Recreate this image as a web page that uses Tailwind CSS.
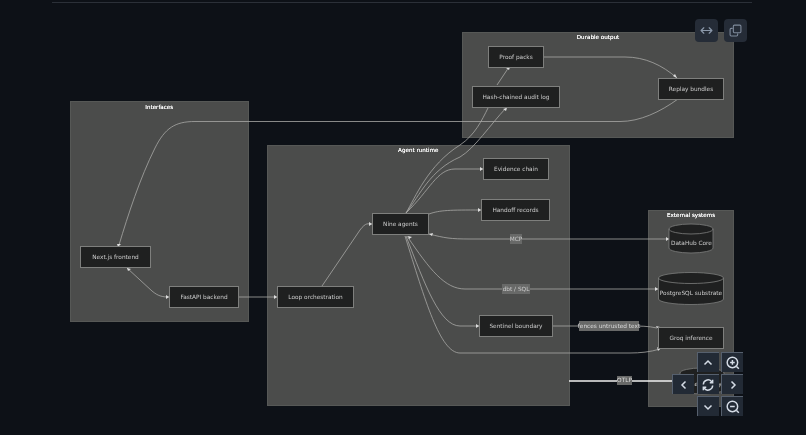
<!DOCTYPE html>
<html lang="en">
<head>
    <meta charset="UTF-8">
    <title>Architecture diagram</title>
    <script src="https://cdn.jsdelivr.net/npm/@tailwindcss/browser@4"></script>
</head>
<body class="bg-[#0d1117] overflow-hidden">
<div class="relative w-[806px] h-[435px] overflow-hidden whitespace-nowrap font-['DejaVu_Sans',sans-serif]">
  <div class="absolute inset-0 blur-[0.3px] will-change-transform">
    <div class="absolute left-[52px] top-[2px] w-[700px] h-px bg-[#2b3038]"></div>

    <!-- clusters -->
    <div class="absolute left-[70px] top-[101px] w-[178.500px] h-[221px] bg-[#4b4c4b] border border-[#565856] text-center text-[5.6px] leading-[11px] text-white [text-shadow:0_0_0.4px_#fff]">Interfaces</div>
    <div class="absolute left-[267px] top-[145px] w-[302.500px] h-[260.500px] bg-[#4b4c4b] border border-[#565856] text-center text-[5.6px] leading-[9px] text-white [text-shadow:0_0_0.4px_#fff]">Agent runtime</div>
    <div class="absolute left-[462px] top-[32px] w-[272px] h-[106px] bg-[#4b4c4b] border border-[#565856] text-center text-[5.6px] leading-[9px] text-white [text-shadow:0_0_0.4px_#fff]">Durable output</div>
    <div class="absolute left-[648px] top-[210px] w-[86px] h-[197px] bg-[#4b4c4b] border border-[#565856] text-center text-[5.6px] leading-[9px] text-white [text-shadow:0_0_0.4px_#fff]">External systems</div>

    <!-- edges -->
    <svg class="absolute left-0 top-0" width="806" height="435" fill="none" stroke="#a8a8a6" stroke-width="0.8">
        <path d="M678 99 C660 112 640 121.500 620 121.500 L195 121.500 C175 121.500 165 128 155 148 C140 178 128 215 119 245"/>
        <path d="M127 268 L152 291 C158 296 162 297 169 297"/>
        <path d="M239 297 L277 297"/>
        <path d="M322 286 L360 230 C366 222 368 224 372 224"/>
        <path d="M406 213 C415 198 428 165 460 145 C475 135 482 120 488 108"/>
        <path d="M406 213 C420 195 430 170 460 157 C475 148 490 125 506 108"/>
        <path d="M406 213 C430 190 437 169 455 169 L483 169"/>
        <path d="M497 85 L509 67"/>
        <path d="M429 214 C440 210 450 210 481 210"/>
        <path d="M429 234 C445 238 450 239 470 239 L669 239"/>
        <path d="M407 236 C430 270 445 289 465 289 L658 289"/>
        <path d="M406 236 C425 285 440 326 460 326 L479 326"/>
        <path d="M405 236 C425 300 440 353 460 353 L630 353 C640 353 650 352 660 349"/>
        <path d="M553 326 L630 326 C640 326 648 326 657 328"/>
        <path d="M544 57 L625 57 C645 57 662 65 677 78"/>
        <path d="M569 381 L672 381" stroke="#f0f0f0" stroke-width="1.500"/>
        <g fill="#dedede" stroke="none">
            <path d="M118 247 L117 244 L121 244 Z"/>
            <path d="M127 268 L131 269 L128 271 Z"/>
            <path d="M169 297 L166 295 L166 299 Z"/>
            <path d="M277 297 L274 295 L274 299 Z"/>
            <path d="M372 224 L369 222 L369 226 Z"/>
            <path d="M510 67 L506 68 L509 70 Z"/>
            <path d="M507 108 L503 109 L506 111 Z"/>
            <path d="M483 169 L480 167 L480 171 Z"/>
            <path d="M481 210 L478 208 L478 212 Z"/>
            <path d="M429 234 L433 233 L432 236 Z"/>
            <path d="M408 236 L412 237 L409 239 Z"/>
            <path d="M669 239 L666 237 L666 241 Z"/>
            <path d="M658 289 L655 287 L655 291 Z"/>
            <path d="M479 326 L476 324 L476 328 Z"/>
            <path d="M677 78 L673 76 L675 74 Z"/>
            <path d="M657 328 L656 326 L660 327 Z"/>
            <path d="M660 349 L657 347 L658 351 Z"/>
        </g>
    </svg>

    <!-- edge labels -->
    <div class="absolute left-[510px] top-[234px] w-[12px] h-[10px] flex items-center justify-center bg-[#686968] text-[5.8px] text-[#ccc]">MCP</div>
    <div class="absolute left-[502px] top-[284px] w-[28px] h-[10px] flex items-center justify-center bg-[#686968] text-[5.8px] text-[#ccc]">dbt / SQL</div>
    <div class="absolute left-[579px] top-[321px] w-[60px] h-[10px] flex items-center justify-center bg-[#686968] text-[5.8px] text-[#ddd]">fences untrusted text</div>
    <div class="absolute left-[617px] top-[376px] w-[15px] h-[9px] flex items-center justify-center bg-[#686968] text-[5.8px] text-[#ddd]">OTLP</div>

    <!-- nodes -->
    <div class="absolute left-[80px] top-[246px] w-[71px] h-[22px] pt-px flex items-center justify-center bg-[#1f2020] border border-[#7e7f7d] text-[5.8px] text-[#ccc]">Next.js frontend</div>
    <div class="absolute left-[169px] top-[286px] w-[70px] h-[22px] pt-px flex items-center justify-center bg-[#1f2020] border border-[#7e7f7d] text-[5.8px] text-[#ccc]">FastAPI backend</div>
    <div class="absolute left-[277px] top-[286px] w-[77px] h-[22px] pt-px flex items-center justify-center bg-[#1f2020] border border-[#7e7f7d] text-[5.8px] text-[#ccc]">Loop orchestration</div>
    <div class="absolute left-[372px] top-[213px] w-[57px] h-[22px] pt-px flex items-center justify-center bg-[#1f2020] border border-[#7e7f7d] text-[5.8px] text-[#ccc]">Nine agents</div>
    <div class="absolute left-[483px] top-[158px] w-[66px] h-[22px] pt-px flex items-center justify-center bg-[#1f2020] border border-[#7e7f7d] text-[5.8px] text-[#ccc]">Evidence chain</div>
    <div class="absolute left-[481px] top-[199px] w-[69px] h-[22px] pt-px flex items-center justify-center bg-[#1f2020] border border-[#7e7f7d] text-[5.8px] text-[#ccc]">Handoff records</div>
    <div class="absolute left-[488px] top-[46px] w-[56px] h-[22px] pt-px flex items-center justify-center bg-[#1f2020] border border-[#7e7f7d] text-[5.8px] text-[#ccc]">Proof packs</div>
    <div class="absolute left-[472px] top-[86px] w-[88px] h-[22px] pt-px flex items-center justify-center bg-[#1f2020] border border-[#7e7f7d] text-[5.8px] text-[#ccc]">Hash-chained audit log</div>
    <div class="absolute left-[658px] top-[78px] w-[66px] h-[22px] pt-px flex items-center justify-center bg-[#1f2020] border border-[#7e7f7d] text-[5.8px] text-[#ccc]">Replay bundles</div>
    <div class="absolute left-[479px] top-[315px] w-[74px] h-[22px] pt-px flex items-center justify-center bg-[#1f2020] border border-[#7e7f7d] text-[5.8px] text-[#ccc]">Sentinel boundary</div>
    <div class="absolute left-[658px] top-[327px] w-[66px] h-[22px] pt-px flex items-center justify-center bg-[#1f2020] border border-[#7e7f7d] text-[5.8px] text-[#ccc]">Groq inference</div>

    <!-- cylinders -->
    <svg class="absolute left-[668px] top-[223px]" width="47" height="31" fill="#1f2020" stroke="#7e7f7d" stroke-width="0.8">
        <path d="M1 6 A22 5 0 0 1 45 6 L45 25 A22 5 0 0 1 1 25 Z"/>
        <path d="M1 6 A22 5 0 0 0 45 6" fill="none"/>
    </svg>
    <div class="absolute left-[668px] top-[238px] w-[47px] h-[10px] flex items-center justify-center text-[5.8px] text-[#ccc]">DataHub Core</div>
    <svg class="absolute left-[658px] top-[272px]" width="66" height="33" fill="#1f2020" stroke="#7e7f7d" stroke-width="0.8">
        <path d="M0.500 6 A32.500 5.500 0 0 1 65.500 6 L65.500 27 A32.500 5.500 0 0 1 0.500 27 Z"/>
        <path d="M0.500 6 A32.500 5.500 0 0 0 65.500 6" fill="none"/>
    </svg>
    <div class="absolute left-[658px] top-[288px] w-[66px] h-[10px] flex items-center justify-center text-[5.8px] text-[#ccc]">PostgreSQL substrate</div>
    <svg class="absolute left-[679px] top-[367px]" width="47" height="30" fill="#1f2020" stroke="#7e7f7d" stroke-width="0.8">
        <path d="M1 6 A22 5 0 0 1 45 6 L45 22 A22 5 0 0 1 1 22 Z"/>
    </svg>
    <div class="absolute left-[679px] top-[379px] w-[47px] h-[10px] flex items-center justify-center text-[5.8px] text-[#ccc]">Observability</div>
  </div>

    <!-- top right buttons -->
    <div class="absolute left-[695px] top-[19px] flex gap-[6px]">
        <button class="w-[23px] h-[23px] rounded-[4px] bg-[#252c37] flex items-center justify-center">
            <svg width="13" height="13" viewBox="0 0 24 24" fill="none" stroke="#8b98aa" stroke-width="2.200" stroke-linecap="round" stroke-linejoin="round"><path d="M7 7l-5 5 5 5M17 7l5 5-5 5M2 12h20"/></svg>
        </button>
        <button class="w-[23px] h-[23px] rounded-[4px] bg-[#252c37] flex items-center justify-center">
            <svg width="13" height="13" viewBox="0 0 24 24" fill="none" stroke="#7f8b9c" stroke-width="2" stroke-linecap="round" stroke-linejoin="round"><rect x="8" y="2" width="14" height="14" rx="2"/><path d="M16 18v2a2 2 0 0 1-2 2H4a2 2 0 0 1-2-2V10a2 2 0 0 1 2-2h2"/></svg>
        </button>
    </div>

    <!-- pan and zoom controls -->
    <div class="absolute left-[672px] top-[352px] grid grid-cols-[22px_22px_22px] grid-rows-[20px_20px_20px] gap-x-[2.500px] gap-y-[2px] text-[#d5dce6]">
        <span></span>
        <button class="bg-[#222a35] border-t-[1.5px] border-l-[1.5px] border-[#56606e] flex items-center justify-center"><svg width="12" height="12" viewBox="0 0 24 24" fill="none" stroke="currentColor" stroke-width="3"><path d="M5 15l7-7 7 7"/></svg></button>
        <button class="bg-[#222a35] border-t-[1.5px] border-l-[1.5px] border-[#56606e] flex items-center justify-center"><svg width="14" height="14" viewBox="0 0 24 24" fill="none" stroke="currentColor" stroke-width="2.500"><circle cx="11" cy="11" r="9"/><path d="M11 7v8M7 11h8M18 18l4 4"/></svg></button>
        <button class="bg-[#222a35] border-t-[1.5px] border-l-[1.5px] border-[#56606e] flex items-center justify-center"><svg width="12" height="12" viewBox="0 0 24 24" fill="none" stroke="currentColor" stroke-width="3"><path d="M15 5l-7 7 7 7"/></svg></button>
        <button class="bg-[#222a35] border-t-[1.5px] border-l-[1.5px] border-[#56606e] flex items-center justify-center"><svg width="14" height="14" viewBox="0 0 24 24" fill="none" stroke="currentColor" stroke-width="2.500"><path d="M4 11a8 8 0 0 1 14-5l2 2M20 3v5h-5M20 13a8 8 0 0 1-14 5l-2-2M4 21v-5h5"/></svg></button>
        <button class="bg-[#222a35] border-t-[1.5px] border-l-[1.5px] border-[#56606e] flex items-center justify-center"><svg width="12" height="12" viewBox="0 0 24 24" fill="none" stroke="currentColor" stroke-width="3"><path d="M9 5l7 7-7 7"/></svg></button>
        <span></span>
        <button class="bg-[#222a35] border-t-[1.5px] border-l-[1.5px] border-[#56606e] flex items-center justify-center"><svg width="12" height="12" viewBox="0 0 24 24" fill="none" stroke="currentColor" stroke-width="3"><path d="M5 9l7 7 7-7"/></svg></button>
        <button class="bg-[#222a35] border-t-[1.5px] border-l-[1.5px] border-[#56606e] flex items-center justify-center"><svg width="14" height="14" viewBox="0 0 24 24" fill="none" stroke="currentColor" stroke-width="2.500"><circle cx="11" cy="11" r="9"/><path d="M7 11h8M18 18l4 4"/></svg></button>
    </div>
</div>
</body>
</html>
